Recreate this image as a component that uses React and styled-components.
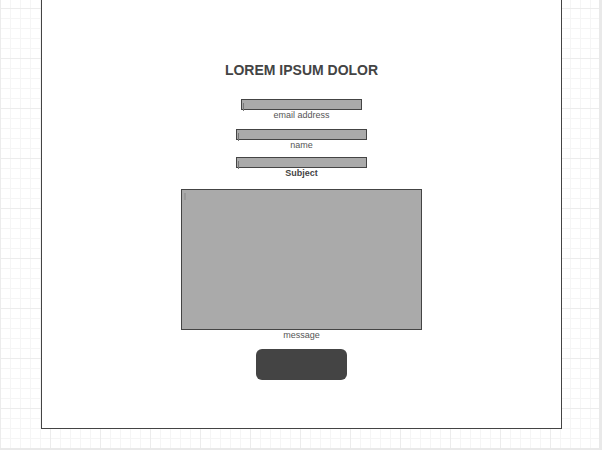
import React from 'react';
import styled, { createGlobalStyle } from 'styled-components';

const GlobalStyle = createGlobalStyle`
  html, body {
    margin: 0;
    padding: 0;
    background: #e9e9e9;
    font-family: "Liberation Sans", Arial, sans-serif;
  }
`;

const Page = styled.div`
  width: 599px;
  height: 448px;
  overflow: hidden;
  background-color: #fff;
  background-image:
    linear-gradient(to right, #ececec 1px, transparent 1px),
    linear-gradient(to bottom, #ececec 1px, transparent 1px),
    linear-gradient(to right, #f5f5f5 1px, transparent 1px),
    linear-gradient(to bottom, #f5f5f5 1px, transparent 1px);
  background-size: 50px 50px, 50px 50px, 10px 10px, 10px 10px;
  background-position: 0 8px, 0 8px, 0 8px, 0 8px;
`;

const Frame = styled.div`
  box-sizing: border-box;
  width: 521px;
  height: 429px;
  margin-left: 41px;
  background: #fff;
  border: 1px solid #444;
  border-top: none;
  display: flex;
  flex-direction: column;
  align-items: center;
  padding-top: 62px;
`;

const Title = styled.h1`
  margin: 0;
  font-size: 14px;
  line-height: 16px;
  font-weight: 700;
  color: #444;
`;

const Box = styled.div`
  position: relative;
  box-sizing: border-box;
  width: ${p => p.$w}px;
  height: ${p => p.$h}px;
  margin-top: ${p => p.$mt}px;
  background: #aaa;
  border: 1px solid #444;
`;

const Caret = styled.span`
  position: absolute;
  left: ${p => (p.$big ? 2 : 1)}px;
  top: 3px;
  width: ${p => (p.$big ? 2 : 1)}px;
  height: ${p => (p.$big ? 7 : 8)}px;
  background: ${p => (p.$big ? '#999' : '#777')};
`;

const Label = styled.div`
  font-size: 9px;
  line-height: 10px;
  color: ${p => (p.$bold ? '#444' : '#555')};
  font-weight: ${p => (p.$bold ? 700 : 400)};
`;

const SendButton = styled.button`
  margin-top: 9px;
  width: 91px;
  height: 31px;
  border: none;
  border-radius: 6px;
  background: #444;
  padding: 0;
`;

const fields = [
  { label: 'email address', w: 121, mt: 21 },
  { label: 'name', w: 131, mt: 9 },
  { label: 'Subject', w: 131, mt: 7, bold: true },
];

export default function App() {
  return (
    <>
      <GlobalStyle />
      <Page>
        <Frame>
          <Title>LOREM IPSUM DOLOR</Title>
          {fields.map(f => (
            <React.Fragment key={f.label}>
              <Box $w={f.w} $h={11} $mt={f.mt}>
                <Caret />
              </Box>
              <Label $bold={f.bold}>{f.label}</Label>
            </React.Fragment>
          ))}
          <Box $w={241} $h={141} $mt={11}>
            <Caret $big />
          </Box>
          <Label>message</Label>
          <SendButton />
        </Frame>
      </Page>
    </>
  );
}
